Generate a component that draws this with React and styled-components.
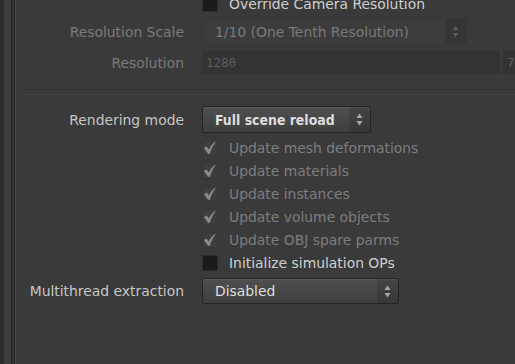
import React from 'react'
import styled, { createGlobalStyle } from 'styled-components'

const Global = createGlobalStyle`
  html, body {
    margin: 0;
    padding: 0;
    background: #3a3a3a;
    overflow: hidden;
  }
  body {
    font-family: "DejaVu Sans", "Liberation Sans", sans-serif;
    font-size: 13.9px;
  }
`;

const Page = styled.div`
  width: 515px;
  height: 364px;
  display: flex;
  overflow: hidden;
  background: #3a3a3a;
`;

const Strip = styled.div`
  flex: 0 0 ${p => p.w}px;
  background: ${p => p.c};
`;

const Panel = styled.div`
  flex: 1;
  display: flex;
  flex-direction: column;
  margin-top: -8px;
  min-width: 0;
`;

const Row = styled.div`
  display: grid;
  grid-template-columns: 168px 1fr;
  column-gap: 18px;
  align-items: center;
  height: ${p => p.h || 23}px;
  margin-top: ${p => p.mt || 0}px;
`;

const Label = styled.div`
  text-align: right;
  white-space: nowrap;
  color: ${p => (p.dim ? '#7b7b7b' : '#c6c6c6')};
`;

const Check = styled.div`
  display: flex;
  align-items: center;
  gap: 11px;
  white-space: nowrap;
  color: ${p => (p.dim ? '#7e7e7e' : '#cfcfcf')};
`;

const Box = styled.div`
  width: 16px;
  height: 16px;
  flex: 0 0 16px;
  box-sizing: border-box;
  display: flex;
  align-items: center;
  justify-content: center;
  background: ${p => (p.on ? '#3e3e3e' : '#1b1b1b')};
  border: 1px solid ${p => (p.on ? '#363636' : '#2c2c2c')};
`;

const Select = styled.div`
  width: ${p => p.w}px;
  height: ${p => p.h || 27}px;
  box-sizing: border-box;
  display: flex;
  align-items: stretch;
  border: 1px solid ${p => (p.dim ? '#363636' : '#242424')};
  border-radius: 2px;
  background: ${p =>
    p.dim
      ? '#3c3c3c'
      : 'linear-gradient(#4f4f4f, #3f3f3f)'};
  box-shadow: ${p => (p.dim ? 'none' : 'inset 0 1px 0 #585858')};
`;

const SelectText = styled.div`
  flex: 1;
  display: flex;
  align-items: center;
  padding-left: 12px;
  white-space: nowrap;
  color: ${p => (p.dim ? '#7a7a7a' : '#dedede')};
  font-weight: ${p => (p.bold ? 'bold' : 'normal')};
  font-family: ${p => (p.bold ? '"DejaVu Sans Condensed", "DejaVu Sans", sans-serif' : 'inherit')};
  font-stretch: ${p => (p.bold ? 'condensed' : 'normal')};
`;

const Arrows = styled.div`
  width: 21px;
  display: flex;
  align-items: center;
  justify-content: center;
  background: ${p => (p.dim ? '#353535' : 'rgba(0,0,0,0.12)')};
`;

const Fields = styled.div`
  display: flex;
  gap: 3px;
  height: 23px;
`;

const Field = styled.div`
  width: ${p => p.w}px;
  flex: 0 0 auto;
  background: #333333;
  color: #5e5e5e;
  font-family: "DejaVu Sans Mono", "Liberation Mono", monospace;
  font-size: 12.5px;
  display: flex;
  align-items: center;
  padding-left: 4px;
  box-sizing: border-box;
`;

const Separator = styled.div`
  height: 1px;
  background: #313131;
  margin: 15px 0 16px 7px;
`;

function ArrowIcon({ dim }) {
  const c = dim ? '#5a5a5a' : '#a8a8a8';
  return (
    <svg width="7" height="13" viewBox="0 0 7 13">
      <path d="M3.5 0.5 L6.5 5 H0.5 Z" fill={c} />
      <path d="M3.5 12.5 L6.5 8 H0.5 Z" fill={c} />
    </svg>
  );
}

function Tick() {
  return (
    <svg width="15" height="15" viewBox="0 0 15 15">
      <path d="M1 8 L4 6.3 L6.2 9.6 C8 5.8 10.6 2.8 14.2 0.8 C11.2 4.5 9 8.6 7.4 14.2 L5.4 14.2 Z" fill="#8c8c8c" />
    </svg>
  );
}

function Dropdown({ w, text, dim, bold, h }) {
  return (
    <Select w={w} dim={dim} h={h}>
      <SelectText dim={dim} bold={bold}>{text}</SelectText>
      <Arrows dim={dim}><ArrowIcon dim={dim} /></Arrows>
    </Select>
  );
}

const checks = [
  'Update mesh deformations',
  'Update materials',
  'Update instances',
  'Update volume objects',
  'Update OBJ spare parms',
];

export default function App() {
  return (
    <Page>
      <Global />
      <Strip w={4} c="#2d2d2d" />
      <Strip w={7} c="#3d3d3d" />
      <Strip w={1} c="#1d1d1d" />
      <Strip w={2} c="#383838" />
      <Strip w={1} c="#202020" />
      <Strip w={1} c="#4a4a4a" />
      <Panel>
        <Row>
          <div />
          <Check>
            <Box />
            Override Camera Resolution
          </Check>
        </Row>
        <Row h={27} mt={3}>
          <Label dim>Resolution Scale</Label>
          <Dropdown w={265} dim text="1/10 (One Tenth Resolution)" />
        </Row>
        <Row mt={6}>
          <Label dim>Resolution</Label>
          <Fields>
            <Field w={298}>1280</Field>
            <Field w={40}>720</Field>
          </Fields>
        </Row>
        <Separator />
        <Row h={27}>
          <Label>Rendering mode</Label>
          <Dropdown w={169} bold text="Full scene reload" />
        </Row>
        {checks.map((t, i) => (
          <Row key={t} mt={i === 0 ? 3 : 0}>
            <div />
            <Check dim>
              <Box on><Tick /></Box>
              {t}
            </Check>
          </Row>
        ))}
        <Row>
          <div />
          <Check>
            <Box />
            Initialize simulation OPs
          </Check>
        </Row>
        <Row h={26} mt={4}>
          <Label>Multithread extraction</Label>
          <Dropdown w={197} h={26} text="Disabled" />
        </Row>
      </Panel>
    </Page>
  )
}
